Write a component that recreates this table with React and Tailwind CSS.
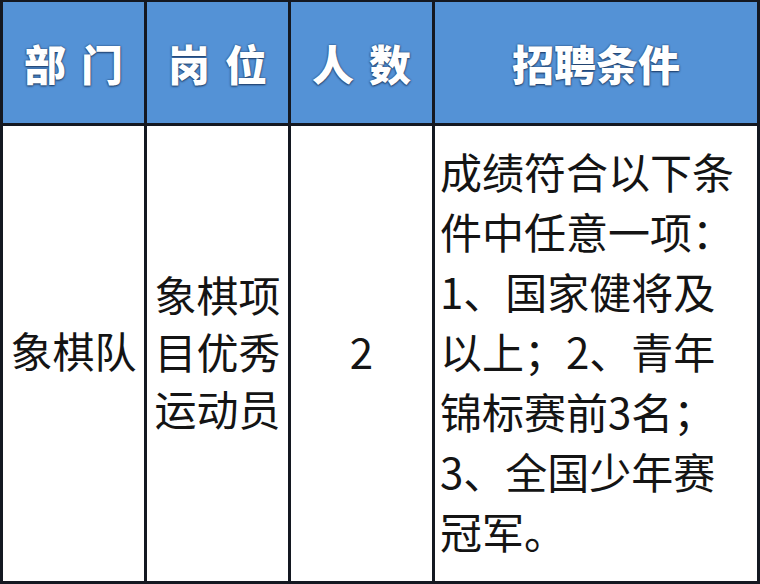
export default function App() {
  const head = "text-white font-black text-[42px] leading-none [text-shadow:0_0_2px_#1d3c66,0_1px_2px_#1d3c66]"
  const body = "text-[#141414] font-normal text-[42px]"
  const conditions = [
    "成绩符合以下条",
    "件中任意一项：",
    "1、国家健将及",
    "以上；2、青年",
    "锦标赛前3名；",
    "3、全国少年赛",
    "冠军。",
  ]

  return (
    <div
      className="w-[760px] h-[584px] bg-white"
      style={{ fontFamily: '"Noto Sans CJK SC", "Noto Sans", sans-serif' }}
    >
      <div className="grid grid-cols-[141px_141px_141px_322px] grid-rows-[121px_455px] gap-[3px] bg-[#141821] pt-[2px] pl-[3px] pr-[3px] pb-[3px] w-[760px] h-[584px]">
        <div className="bg-[#5492d6] flex items-center justify-center gap-[15px]">
          <span className={head}>部</span>
          <span className={head}>门</span>
        </div>
        <div className="bg-[#5492d6] flex items-center justify-center gap-[15px]">
          <span className={head}>岗</span>
          <span className={head}>位</span>
        </div>
        <div className="bg-[#5492d6] flex items-center justify-center gap-[15px]">
          <span className={head}>人</span>
          <span className={head}>数</span>
        </div>
        <div className="bg-[#5492d6] flex items-center justify-center">
          <span className={head}>招聘条件</span>
        </div>

        <div className="bg-white flex items-center justify-center pb-[8px]">
          <span className={body + " leading-[58px]"}>象棋队</span>
        </div>
        <div className="bg-white flex flex-col items-center justify-center pb-[6px]">
          <span className={body + " leading-[57px]"}>象棋项</span>
          <span className={body + " leading-[57px]"}>目优秀</span>
          <span className={body + " leading-[57px]"}>运动员</span>
        </div>
        <div className="bg-white flex items-center justify-center pb-[6px]">
          <span className={body + " leading-[58px]"}>2</span>
        </div>
        <div className="bg-white flex flex-col justify-center pl-[5px] pb-[6px]">
          {conditions.map((line) => (
            <span key={line} className={body + " leading-[60px] whitespace-nowrap"}>
              {line}
            </span>
          ))}
        </div>
      </div>
    </div>
  )
}
